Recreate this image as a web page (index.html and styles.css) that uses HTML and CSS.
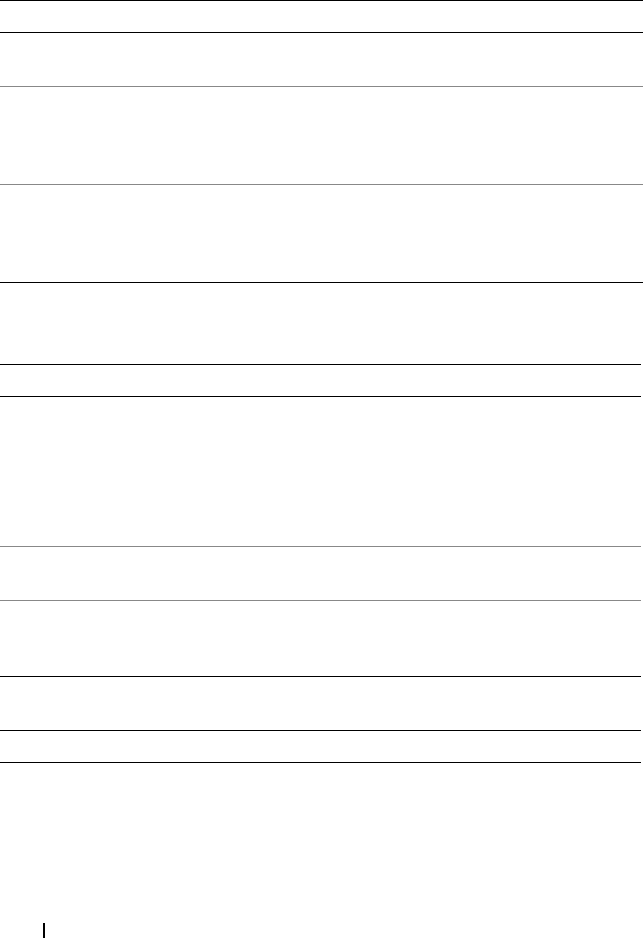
FILE: index.html
```html
<!DOCTYPE html>
<html>
<head>
<meta charset="utf-8">
<link rel="stylesheet" href="styles.css">
</head>
<body>
<div class="page">
  <div class="table table-a">
    <div class="row head h32"></div>
    <div class="row soft h54"></div>
    <div class="row soft h98"></div>
    <div class="row end h98"></div>
  </div>
  <div class="gap"></div>
  <div class="table table-b">
    <div class="row head h32"></div>
    <div class="row soft h150"></div>
    <div class="row soft h54"></div>
    <div class="row end h76"></div>
    <div class="row end h54"></div>
    <div class="row end h32"></div>
  </div>
  <div class="spacer"></div>
  <div class="footer"><span class="bar"></span></div>
</div>
</body>
</html>
```

FILE: styles.css
```css
html, body {
  margin: 0;
  padding: 0;
  background: #ffffff;
  font-family: "Liberation Sans", Arial, sans-serif;
}
.page {
  width: 643px;
  height: 938px;
  display: flex;
  flex-direction: column;
  overflow: hidden;
}
.table {
  border-top: 1px solid #000000;
  display: flex;
  flex-direction: column;
}
.table-a {
  width: 643px;
}
.table-b {
  width: 641px;
}
.row {
  box-sizing: border-box;
  border-bottom: 1px solid #000000;
}
.row.soft {
  border-bottom: 1px solid #888888;
}
.row.head,
.row.end {
  border-bottom: 1px solid #000000;
}
.h32 { height: 32px; }
.h54 { height: 54px; }
.h76 { height: 76px; }
.h98 { height: 98px; }
.h150 { height: 150px; }
.gap {
  height: 81px;
}
.spacer {
  flex: 1;
}
.footer {
  height: 15px;
  padding-left: 43px;
  display: flex;
  align-items: flex-end;
}
.bar {
  display: block;
  width: 2px;
  height: 15px;
  background: #000000;
}
```
